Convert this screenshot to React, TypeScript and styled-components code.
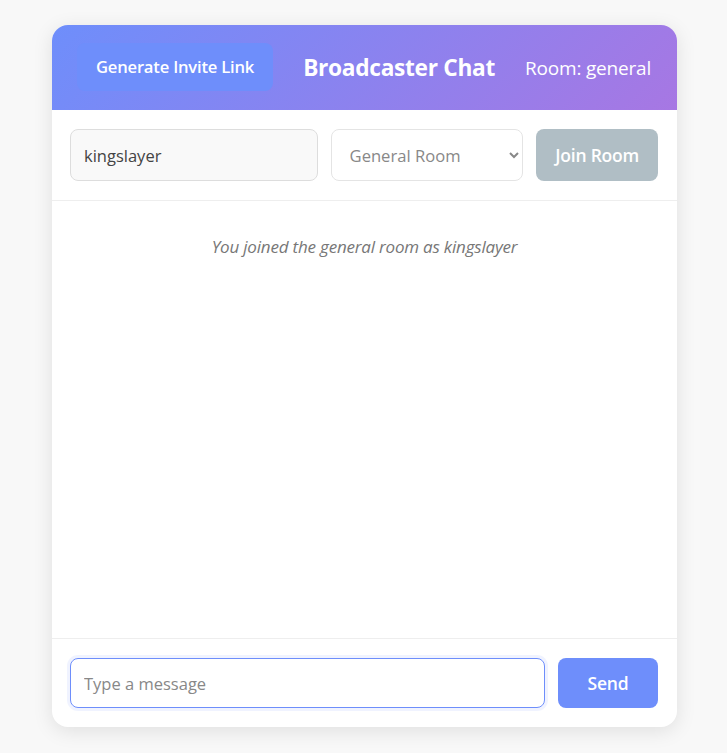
import React from "react";
import styled, { createGlobalStyle } from "styled-components";

const Global = createGlobalStyle`
  html, body { margin: 0; padding: 0; }
  body {
    background: #f8f8f8;
    font-family: "Open Sans", "Noto Sans", sans-serif;
  }
`;

const Page = styled.div`
  padding: 25px 0 26px 2px;
  display: flex;
  justify-content: center;
`;

const Card = styled.div`
  width: 625px;
  height: 702px;
  background: #fff;
  border-radius: 16px;
  box-shadow: 0 4px 20px rgba(0, 0, 0, 0.1);
  overflow: hidden;
  display: flex;
  flex-direction: column;
`;

const Header = styled.header`
  height: 85px;
  box-sizing: border-box;
  padding: 0 26px 0 25px;
  display: flex;
  align-items: center;
  justify-content: space-between;
  background: linear-gradient(135deg, #6e8efb, #a777e3);
  color: #fff;
`;

const InviteButton = styled.button`
  height: 48px;
  padding: 0 19px;
  border: none;
  border-radius: 8px;
  background: #6e8efb;
  color: #fff;
  font-family: inherit;
  font-size: 16.6px;
  font-weight: 600;
  letter-spacing: -0.2px;
  margin-top: -2px;
`;

const Title = styled.h1`
  margin: 0;
  font-size: 22.7px;
  font-weight: 700;
  letter-spacing: -0.3px;
`;

const RoomLabel = styled.span`
  font-size: 19px;
  letter-spacing: -0.2px;
`;

const JoinRow = styled.div`
  display: flex;
  gap: 13px;
  padding: 19px 19px 19px 18px;
  border-bottom: 1px solid #eee;
`;

const Field = styled.input<{ $tint?: boolean; $focus?: boolean }>`
  box-sizing: border-box;
  height: ${(p) => (p.$focus ? "50px" : "52px")};
  padding: 0 13px;
  border: 1px solid ${(p) => (p.$focus ? "#6e8efb" : "#ddd")};
  border-radius: 8px;
  background: ${(p) => (p.$tint ? "#f9f9f9" : "#fff")};
  color: #444;
  font-family: inherit;
  font-size: 16.5px;
  outline: none;
  box-shadow: ${(p) => (p.$focus ? "0 0 0 3px rgba(110, 142, 251, 0.1)" : "none")};
  &::placeholder { color: #888; }
`;

const NameField = styled(Field)`
  width: 248px;
`;

const RoomSelect = styled.select`
  box-sizing: border-box;
  width: 193px;
  height: 52px;
  padding: 0 12px 0 14px;
  border: 1px solid #e4e4e4;
  border-radius: 8px;
  background: #fff;
  color: #888;
  font-family: inherit;
  font-size: 16.6px;
`;

const ActionButton = styled.button<{ $disabled?: boolean }>`
  box-sizing: border-box;
  height: ${(p) => (p.$disabled ? "52px" : "50px")};
  width: ${(p) => (p.$disabled ? "122px" : "100px")};
  border: none;
  border-radius: 8px;
  background: ${(p) => (p.$disabled ? "#b0bec5" : "#6e8efb")};
  color: #fff;
  font-family: inherit;
  font-size: 17.5px;
  font-weight: 600;
  letter-spacing: -0.2px;
`;

const Messages = styled.div`
  flex: 1;
  padding: 34px 20px;
  display: flex;
  flex-direction: column;
  align-items: center;
`;

const SystemMessage = styled.p`
  margin: 0;
  color: #777;
  font-style: italic;
  font-size: 17px;
  letter-spacing: -0.2px;
`;

const Composer = styled.div`
  display: flex;
  gap: 13px;
  padding: 19px 19px 19px 18px;
  border-top: 1px solid #eee;
`;

const MessageField = styled(Field)`
  flex: 1;
`;

export default function App() {
  return (
    <>
      <Global />
      <Page>
        <Card>
          <Header>
            <InviteButton>Generate Invite Link</InviteButton>
            <Title>Broadcaster Chat</Title>
            <RoomLabel>Room: general</RoomLabel>
          </Header>
          <JoinRow>
            <NameField $tint defaultValue="kingslayer" />
            <RoomSelect defaultValue="general">
              <option value="general">General Room</option>
              <option value="random">Random Room</option>
            </RoomSelect>
            <ActionButton $disabled>Join Room</ActionButton>
          </JoinRow>
          <Messages>
            <SystemMessage>You joined the general room as kingslayer</SystemMessage>
          </Messages>
          <Composer>
            <MessageField $focus placeholder="Type a message" />
            <ActionButton>Send</ActionButton>
          </Composer>
        </Card>
      </Page>
    </>
  );
}
